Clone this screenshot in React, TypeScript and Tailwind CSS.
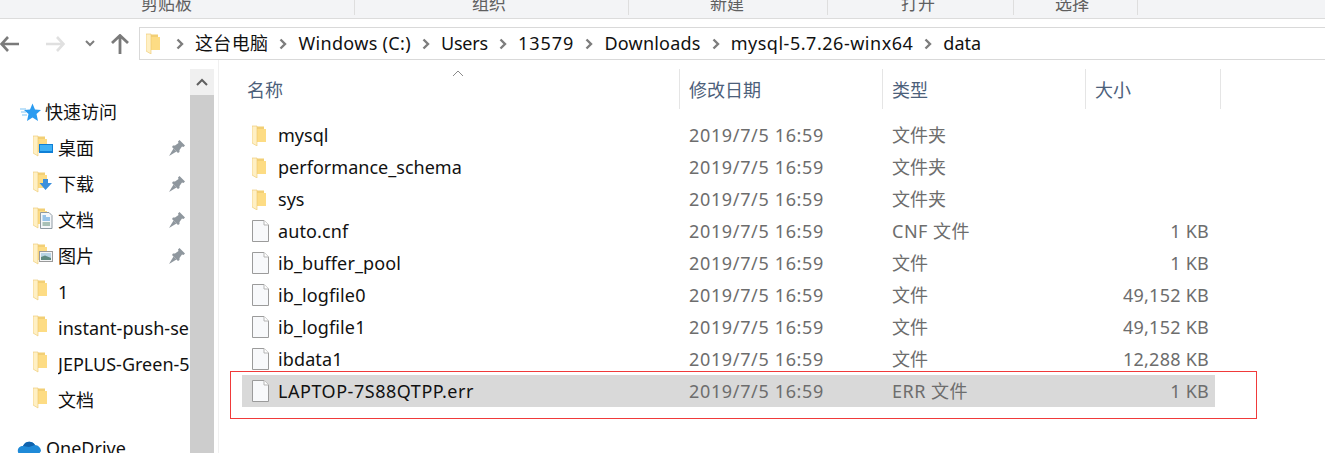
import React from 'react';

const ribbon = [
  { label: '剪贴板', width: 'w-[355px]', pl: 'pl-[141px]' },
  { label: '组织', width: 'w-[274px]', pl: 'pl-[117px]' },
  { label: '新建', width: 'w-[199px]', pl: 'pl-[81px]' },
  { label: '打开', width: 'w-[186px]', pl: 'pl-[73px]' },
  { label: '选择', width: 'w-[124px]', pl: 'pl-[41px]' },
];

const crumbs = [
  { text: '这台电脑', cls: 'tracking-[0.35px]' },
  { text: 'Windows (C:)', cls: 'tracking-[0.33px]' },
  { text: 'Users', cls: 'tracking-[-0.2px]' },
  { text: '13579', cls: 'tracking-[1px]' },
  { text: 'Downloads', cls: 'tracking-[0.22px]' },
  { text: 'mysql-5.7.26-winx64', cls: 'tracking-[0.52px]' },
  { text: 'data', cls: '' },
];

const files = [
  { name: 'mysql', date: '2019/7/5 16:59', type: '文件夹', size: '', folder: true },
  { name: 'performance_schema', date: '2019/7/5 16:59', type: '文件夹', size: '', folder: true },
  { name: 'sys', date: '2019/7/5 16:59', type: '文件夹', size: '', folder: true },
  { name: 'auto.cnf', date: '2019/7/5 16:59', type: 'CNF 文件', size: '1 KB' },
  { name: 'ib_buffer_pool', date: '2019/7/5 16:59', type: '文件', size: '1 KB' },
  { name: 'ib_logfile0', date: '2019/7/5 16:59', type: '文件', size: '49,152 KB' },
  { name: 'ib_logfile1', date: '2019/7/5 16:59', type: '文件', size: '49,152 KB' },
  { name: 'ibdata1', date: '2019/7/5 16:59', type: '文件', size: '12,288 KB' },
  { name: 'LAPTOP-7S88QTPP.err', date: '2019/7/5 16:59', type: 'ERR 文件', size: '1 KB', selected: true },
];

const quick = [
  { name: '桌面', badge: 'desktop', pin: true },
  { name: '下载', badge: 'download', pin: true },
  { name: '文档', badge: 'doc', pin: true },
  { name: '图片', badge: 'pic', pin: true },
  { name: '1' },
  { name: 'instant-push-server' },
  { name: 'JEPLUS-Green-5.0' },
  { name: '文档' },
];

const FolderShape = () => (
  <>
    <path d="M0 1.5 L12 1.5 L12 4 L14 4 L14 17 L0 17 Z" fill="#f2cf75" />
    <path d="M5 4 H14 V17 H5 Z" fill="#fddc84" />
    <path d="M0 1 L5 1 L5 21 L0 18 Z" fill="#fff0c4" stroke="#ecc76c" strokeWidth="0.6" />
  </>
);

const Folder = () => (
  <svg width="14" height="21" viewBox="0 0 14 21" className="shrink-0">
    <FolderShape />
  </svg>
);

const NavFolder = ({ badge }: { badge?: string }) => (
  <svg width="21" height="26" viewBox="0 0 21 26" className="shrink-0">
    <FolderShape />
    {badge === 'desktop' && (
      <>
        <rect x="6" y="9" width="14" height="9" fill="#0f7fd6" />
        <rect x="7" y="10" width="12" height="6" fill="#3fb1f5" />
      </>
    )}
    {badge === 'download' && <path d="M10 8 H15 V12 H19 L12.5 19 L6.5 12 H10 Z" fill="#3b8fdc" />}
    {badge === 'doc' && (
      <>
        <path d="M7.5 5.5 H16 L19 8.5 V21.5 H7.5 Z" fill="#f5f7f9" stroke="#8f9aa3" />
        <path d="M9.5 9 H13 M9.5 11 H17 M9.5 13 H17" stroke="#3a8fd8" />
        <path d="M9.5 16 H17 M9.5 18 H17" stroke="#5d8a74" />
      </>
    )}
    {badge === 'pic' && (
      <>
        <rect x="6.5" y="8.5" width="13" height="10" fill="#f4f5f6" stroke="#9a9a9a" />
        <path d="M8 10 H18 V17 H8 Z" fill="#b9d4e4" />
        <path d="M8 17 L8 14 L12 12.5 L18 15 L18 17 Z" fill="#5f8a80" />
      </>
    )}
  </svg>
);

const FileIcon = () => (
  <svg width="17" height="22" viewBox="0 0 17 22" className="shrink-0">
    <path d="M0.5 0.5 H12 L16.5 5 V21.5 H0.5 Z" fill="#f8f9fb" stroke="#9b9b9b" />
    <path d="M12 0.5 V5 H16.5" fill="#ffffff" stroke="#b5b5b5" />
  </svg>
);

const Pin = () => (
  <svg width="16" height="16" viewBox="0 0 16 16" className="shrink-0">
    <path d="M10.5 0 L16 5.5 L14.5 7 L13 6.5 L10.5 10 L10.5 12 L9 13 L3 7 L4 5.5 L6 5.5 L9.5 3 L9 1.5 Z" fill="#8f979e" />
    <path d="M4.5 8.5 L0 16 L7.5 11.5 Z" fill="#8f979e" />
  </svg>
);

const Crumb = () => (
  <svg width="8" height="12" viewBox="0 0 8 12" className="shrink-0">
    <path d="M1.5 1.5 L6 6 L1.5 10.5" fill="none" stroke="#7d7d7d" strokeWidth="2.4" />
  </svg>
);

const App = () => {
  return (
    <div className="relative flex h-[453px] w-[1325px] flex-col overflow-hidden bg-white text-[18px] text-[#111] [font-family:'Noto_Sans','Noto_Sans_CJK_SC',sans-serif]">
      {/* ribbon, cut off by the top of the shot */}
      <div className="flex h-[19px] shrink-0 items-start overflow-hidden border-b border-[#dcdcdc] bg-[#f3f4f6]">
        {ribbon.map((r) => (
          <div key={r.label} className={`h-[15px] shrink-0 overflow-hidden border-r border-[#dedede] ${r.width} ${r.pl}`}>
            <div className="-mt-[8px] text-[17px] leading-[24px] text-[#5f5f5f]">{r.label}</div>
          </div>
        ))}
      </div>

      {/* nav + address bar */}
      <div className="flex h-[41px] shrink-0 items-start">
        <div className="flex h-[41px] w-[139px] shrink-0 items-center pt-[8px]">
          <svg width="19" height="16" viewBox="0 0 19 16" className="shrink-0">
            <path d="M8 1 L1.5 8 L8 15 M2 8 H19" fill="none" stroke="#7a7a7a" strokeWidth="2.6" />
          </svg>
          <svg width="19" height="16" viewBox="0 0 19 16" className="ml-[27px] shrink-0">
            <path d="M11 1 L17.5 8 L11 15 M0 8 H17" fill="none" stroke="#e0e0e0" strokeWidth="2.6" />
          </svg>
          <svg width="10" height="7" viewBox="0 0 10 7" className="ml-[20px] shrink-0">
            <path d="M1 1 L5 5 L9 1" fill="none" stroke="#7d7d7d" strokeWidth="2" />
          </svg>
          <svg width="18" height="20" viewBox="0 0 18 20" className="ml-[16px] shrink-0">
            <path d="M1 9 L9 1.5 L17 9 M9 2 V20" fill="none" stroke="#7a7a7a" strokeWidth="2.8" />
          </svg>
        </div>
        <div className="mt-[8px] flex h-[33px] flex-1 items-center border border-r-0 border-[#d9d9d9] pl-[6px]">
          <Folder />
          <div className="ml-[16px] flex items-center">
            {crumbs.map((c) => (
              <div key={c.text} className="flex items-center">
                <Crumb />
                <span className={`mr-[11px] ml-[11px] -translate-y-[1px] leading-[24px] whitespace-nowrap ${c.cls}`}>{c.text}</span>
              </div>
            ))}
          </div>
        </div>
      </div>

      <div className="flex min-h-0 flex-1">
        {/* navigation pane */}
        <div className="w-[190px] shrink-0 overflow-hidden pt-[34px]">
          <div className="flex h-[36px] items-center pl-[20px]">
            <svg width="21" height="19" viewBox="0 0 21 19" className="shrink-0">
              <path d="M12.5 0.5 L15 6.5 L21 7 L16.5 11 L18 18 L12.5 14.5 L7 18 L8.5 11 L4 7 L10 6.5 Z" fill="#2a9bf0" />
              <path d="M0 6 H6 M1 9 H6 M2 12 H7" stroke="#7cc3f5" strokeWidth="1.2" />
            </svg>
            <span className="ml-[4px] whitespace-nowrap">快速访问</span>
          </div>
          {quick.map((q, i) => (
            <div key={i} className="flex h-[36px] items-center pl-[33px]">
              <div className="flex w-[25px] shrink-0 items-start">
                <NavFolder badge={q.badge} />
              </div>
              <span className="w-[132px] shrink-0 overflow-hidden whitespace-nowrap">{q.name}</span>
              {q.pin && <div className="-ml-[21px]"><Pin /></div>}
            </div>
          ))}
          <div className="mt-[12px] flex h-[36px] items-center pl-[17px]">
            <svg width="24" height="16" viewBox="0 0 24 16" className="shrink-0">
              <path d="M2 14 C-1 10 2 6 6 6 C8 1 15 0 18 5 C21 5 24 8 24 11 L22 14 Z" fill="#1f8ad8" />
              <path d="M6 6 C8 1 15 0 18 5 L12 7 Z" fill="#0f62ad" />
            </svg>
            <span className="ml-[5px] whitespace-nowrap">OneDrive</span>
          </div>
        </div>

        {/* scrollbar */}
        <div className="flex w-[24px] shrink-0 flex-col pt-[9px]">
          <div className="flex h-[26px] shrink-0 items-center justify-center bg-[#f0f0f0]">
            <svg width="12" height="8" viewBox="0 0 12 8">
              <path d="M1 7 L6 2 L11 7" fill="none" stroke="#606060" strokeWidth="2" />
            </svg>
          </div>
          <div className="flex-1 bg-[#cdcdcd]" />
        </div>

        {/* file list */}
        <div className="ml-[4px] min-w-0 flex-1 border-l border-[#f0f0f0] pt-[9px]">
          <div className="flex h-[40px] text-[#4c607a]">
            <div className="relative w-[461px] shrink-0 border-r border-[#e5e5e5] pt-[8px] pl-[28px]">
              名称
              <svg width="12" height="7" viewBox="0 0 12 7" className="absolute top-[1px] left-[233px]">
                <path d="M1 6 L6 1 L11 6" fill="none" stroke="#8a8a8a" strokeWidth="1" />
              </svg>
            </div>
            <div className="w-[203px] shrink-0 border-r border-[#e5e5e5] pt-[8px] pl-[9px]">修改日期</div>
            <div className="w-[203px] shrink-0 border-r border-[#e5e5e5] pt-[8px] pl-[9px]">类型</div>
            <div className="w-[135px] shrink-0 border-r border-[#e5e5e5] pt-[8px] pl-[9px]">大小</div>
          </div>
          <div className="mt-[10px] ml-[23px] w-[973px]">
            {files.map((f) => (
              <div
                key={f.name}
                className={`grid h-[32px] grid-cols-[447px_203px_203px_1fr] items-center text-[#6d6d6d] ${f.selected ? 'bg-[#d9d9d9]' : ''}`}
              >
                <div className="flex items-center pl-[9px] text-[#111]">
                  <div className="flex w-[27px] shrink-0 items-center pl-[1px]">{f.folder ? <Folder /> : <FileIcon />}</div>
                  <span className={`whitespace-nowrap ${f.selected ? 'tracking-[0.53px]' : f.folder ? 'tracking-[0.02px]' : 'tracking-[0.12px]'}`}>{f.name}</span>
                </div>
                <span className="tracking-[0.65px] whitespace-nowrap">{f.date}</span>
                <span className={`whitespace-nowrap ${f.type.length > 3 ? 'tracking-[0.5px]' : ''}`}>{f.type}</span>
                <span className="pr-[6px] text-right tracking-[0.25px] whitespace-nowrap">{f.size}</span>
              </div>
            ))}
          </div>
        </div>
      </div>

      {/* red annotation box drawn over the shot */}
      <div className="absolute top-[371px] left-[230px] h-[48px] w-[1027px] border border-[#f03a3a]" />
    </div>
  );
};

export default App;
